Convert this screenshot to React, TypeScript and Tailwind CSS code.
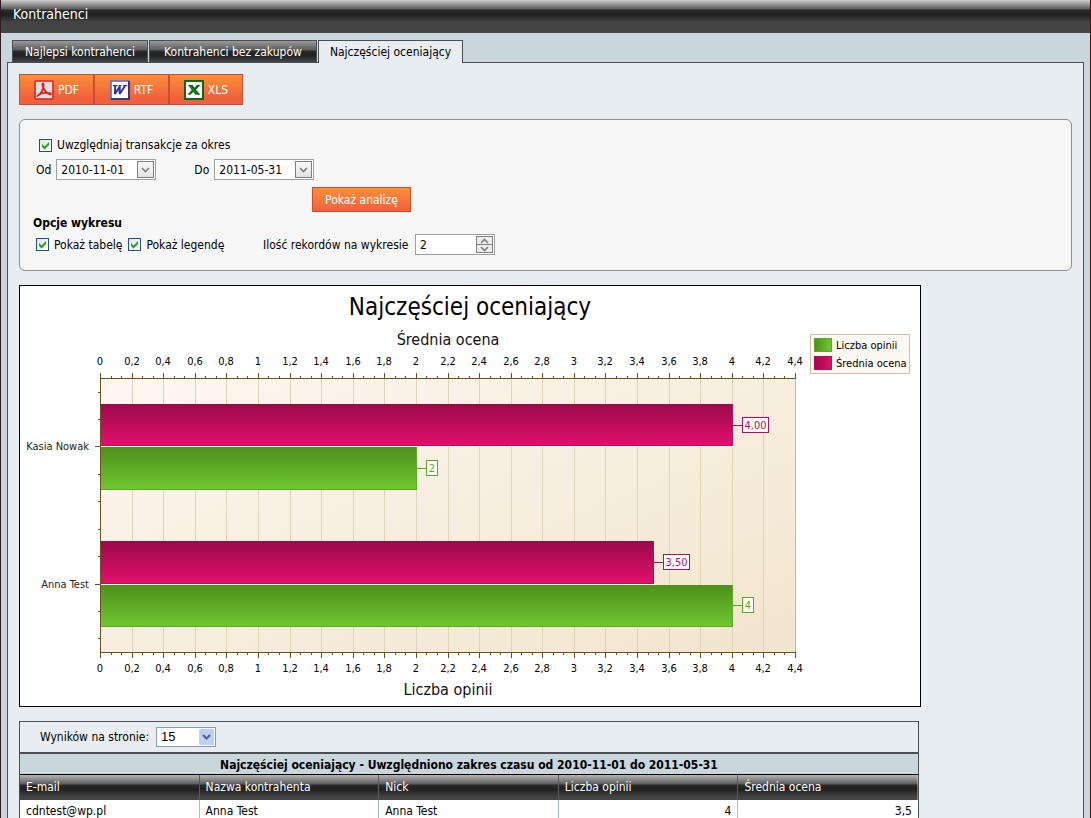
import React from 'react';

const tabs = [
  { label: 'Najlepsi kontrahenci', width: 'w-[136px]', active: false },
  { label: 'Kontrahenci bez zakupów', width: 'w-[168px]', active: false },
  { label: 'Najczęściej oceniający', width: 'w-[145px]', active: true },
];

const columns = ['E-mail', 'Nazwa kontrahenta', 'Nick', 'Liczba opinii', 'Średnia ocena'];

const rows = [{ email: 'cdntest@wp.pl', name: 'Anna Test', nick: 'Anna Test', reviews: '4', average: '3,5' }];

function PdfIcon() {
  return (
    <svg width="20" height="20" viewBox="0 0 20 20" aria-hidden="true">
      <rect x="1" y="1" width="18" height="18" rx="1" fill="#dedede" stroke="#d8241c" strokeWidth="1.6" />
      <path
        d="M3.200 16c2.600-1 5-4.500 6-8.200.6-2.300.5-4.300-.2-4.400-.9-.1-.7 2.600.6 5.100 1.600 3 4 5.500 7.200 6.100M3.200 16c2.500-2.600 8-3.800 13.600-2.600"
        fill="none"
        stroke="#d8241c"
        strokeWidth="1.800"
        strokeLinecap="round"
      />
    </svg>
  );
}

function WordIcon() {
  return (
    <svg width="20" height="20" viewBox="0 0 20 20" aria-hidden="true">
      <rect x="1" y="1" width="18" height="18" fill="#fff" stroke="#6a6ab4" strokeWidth="1.6" />
      <path d="M1 19h18V1" fill="none" stroke="#26266e" strokeWidth="1.6" />
      <path
        d="M5.200 6l-.2 8 4.800-7.500-.2 7.500L15 6"
        fill="none"
        stroke="#35358c"
        strokeWidth="2"
        strokeLinejoin="bevel"
      />
      <path d="M3 5.700h4.500M8.500 5.700h3M13 5.700h4.300" fill="none" stroke="#35358c" strokeWidth="1.2" />
    </svg>
  );
}

function ExcelIcon() {
  return (
    <svg width="20" height="20" viewBox="0 0 20 20" aria-hidden="true">
      <rect x="1" y="1" width="18" height="18" fill="#fff" stroke="#0b6a12" strokeWidth="2" />
      <path d="M4 5h4.500l2 2.700L13 5h3.500l-4.500 4.800 4.500 5h-5l-2.300-2.800-2.700 2.800H3.500l4.200-4.800z" fill="#0b6a12" />
      <path d="M5.700 6l7.500 8" stroke="#4f9f55" strokeWidth=".6" />
    </svg>
  );
}

const exports = [
  { label: 'PDF', icon: <PdfIcon />, width: 'w-[75px]' },
  { label: 'RTF', icon: <WordIcon />, width: 'w-[75px]' },
  { label: 'XLS', icon: <ExcelIcon />, width: 'w-[74px]' },
];

function Chevron({ up = false }: { up?: boolean }) {
  return (
    <svg width="9" height="6" viewBox="0 0 9 6" className={up ? 'rotate-180' : ''} aria-hidden="true">
      <path d="M1 1l3.500 3.500L8 1" fill="none" stroke="#7d7d7d" strokeWidth="1.6" />
    </svg>
  );
}

function CheckField({ label }: { label: string }) {
  return (
    <label className="flex items-center gap-[5px]">
      <span className="relative flex">
        <input
          type="checkbox"
          defaultChecked
          className="peer size-[13px] appearance-none border border-[#1c5180] bg-linear-to-br from-[#e4e4e0] to-white"
        />
        <svg
          viewBox="0 0 13 13"
          className="pointer-events-none absolute inset-0 size-[13px] opacity-0 peer-checked:opacity-100"
          aria-hidden="true"
        >
          <path d="M3 5v3l2.500 2.500L10 6V3L5.500 7.500z" fill="#21a121" />
        </svg>
      </span>
      {label}
    </label>
  );
}

function DateField({ id, label, value }: { id: string; label: string; value: string }) {
  return (
    <div className="flex items-center gap-[5px]">
      <label htmlFor={id}>{label}</label>
      <div className="flex h-[21px] w-[100px] items-center border border-[#9f9f9f] bg-white p-px">
        <input id={id} type="text" defaultValue={value} className="min-w-0 flex-1 pl-[3px] outline-none" />
        <button
          type="button"
          aria-label={`${label} – kalendarz`}
          className="flex size-[17px] shrink-0 items-center justify-center border border-[#7f7f7f] bg-linear-to-b from-[#fafafa] to-[#e2e2e2]"
        >
          <Chevron />
        </button>
      </div>
    </div>
  );
}

// Plot area geometry inside the 900x420 drawing
const LEFT = 80;
const RIGHT = 775;
const TOP = 92;
const BOTTOM = 366;
const MAX = 4.4;

const px = (value: number) => Math.round(LEFT + (value * (RIGHT - LEFT)) / MAX);

const bars = [
  { value: 4, text: '4,00', y: 118, height: 42, kind: 'average' },
  { value: 2, text: '2', y: 161, height: 43, kind: 'reviews' },
  { value: 3.5, text: '3,50', y: 255, height: 43, kind: 'average' },
  { value: 4, text: '4', y: 299, height: 42, kind: 'reviews' },
];

const categories = [
  { label: 'Kasia Nowak', y: 160 },
  { label: 'Anna Test', y: 298 },
];

function Chart() {
  const majors = Array.from({ length: 23 }, (_, i) => i * 0.2);
  const minors = Array.from({ length: 67 }, (_, i) => i).filter((i) => i % 3 !== 0);

  return (
    <svg
      viewBox="0 0 900 420"
      className="block h-auto w-full font-['DejaVu_Sans_Condensed',Tahoma,sans-serif]"
      role="img"
      aria-label="Najczęściej oceniający"
    >
      <defs>
        <linearGradient id="plot" x1="0" y1="0" x2="1" y2="1">
          <stop offset="0" stopColor="#fff7f2" />
          <stop offset="0.35" stopColor="#f8f1e4" />
          <stop offset="1" stopColor="#f2e5cd" />
        </linearGradient>
        <linearGradient id="average" x1="0" y1="0" x2="0" y2="1">
          <stop offset="0" stopColor="#9b0a4a" />
          <stop offset="1" stopColor="#e30f6c" />
        </linearGradient>
        <linearGradient id="reviews" x1="0" y1="0" x2="0" y2="1">
          <stop offset="0" stopColor="#4d8f1c" />
          <stop offset="1" stopColor="#70c82f" />
        </linearGradient>
        <linearGradient id="legendAverage">
          <stop offset="0" stopColor="#9b0a4a" />
          <stop offset="1" stopColor="#e30f6c" />
        </linearGradient>
        <linearGradient id="legendReviews">
          <stop offset="0" stopColor="#4d8f1c" />
          <stop offset="1" stopColor="#70c82f" />
        </linearGradient>
      </defs>

      <text x="450" y="29" fontSize="24" textAnchor="middle">
        Najczęściej oceniający
      </text>
      <text x="428" y="59" fontSize="16" textAnchor="middle" fill="#111">
        Średnia ocena
      </text>
      <text x="428" y="409" fontSize="16" textAnchor="middle" fill="#111">
        Liczba opinii
      </text>

      <rect x={LEFT} y={TOP} width={RIGHT - LEFT} height={BOTTOM - TOP} fill="url(#plot)" />

      {/* Grid lines */}
      {majors.slice(1).map((v) => (
        <rect key={v} x={px(v)} y={TOP} width="1" height={BOTTOM - TOP} fill={v > 4.3 ? '#c9b899' : '#dfd4b8'} />
      ))}

      {/* Axes with major and minor ticks */}
      <g fill="#6e4f1b">
        <rect x={LEFT} y={TOP} width={RIGHT - LEFT + 1} height="1" />
        <rect x={LEFT} y={BOTTOM} width={RIGHT - LEFT + 1} height="1" />
        <rect x={LEFT} y={TOP} width="1" height={BOTTOM - TOP} />
        {majors.map((v) => (
          <React.Fragment key={v}>
            <rect x={px(v)} y={TOP - 5} width="1" height="5" />
            <rect x={px(v)} y={BOTTOM} width="1" height="6" />
          </React.Fragment>
        ))}
        {minors.map((i) => (
          <React.Fragment key={i}>
            <rect x={px(i / 15)} y={TOP - 2} width="1" height="2" />
            <rect x={px(i / 15)} y={BOTTOM + 1} width="1" height="2" />
          </React.Fragment>
        ))}
        {[106, 133, 188, 215, 243, 270, 325, 352].map((y) => (
          <rect key={y} x={LEFT - 2} y={y} width="2" height="1" />
        ))}
        {categories.map((c) => (
          <rect key={c.label} x={LEFT - 5} y={c.y} width="5" height="1" />
        ))}
      </g>

      {majors.map((v) => {
        const text = String(Math.round(v * 10) / 10).replace('.', ',');
        return (
          <g key={v} fontSize="11" textAnchor="middle">
            <text x={px(v)} y="79">{text}</text>
            <text x={px(v)} y="386">{text}</text>
          </g>
        );
      })}

      {categories.map((c) => (
        <text key={c.label} x="69" y={c.y + 4} fontSize="11" textAnchor="end" fill="#222">
          {c.label}
        </text>
      ))}

      {bars.map((b) => {
        const color = b.kind === 'average' ? '#bd0c5c' : '#5ba727';
        const end = px(b.value) + 1;
        const mid = b.kind === 'average' ? b.y + 21 : categories[0].y + 22 + (b.y > 200 ? 137 : 0);
        const boxWidth = b.text.length > 1 ? 26 : 11;
        return (
          <g key={b.y}>
            <rect x={LEFT + 1} y={b.y} width={end - LEFT - 1} height={b.height} fill={`url(#${b.kind})`} />
            <rect x={LEFT + 1} y={b.y + b.height - 1} width={end - LEFT - 1} height="1" fill={color} />
            <rect x={end - 1} y={b.y} width="1" height={b.height} fill={color} />
            {b.kind === 'average' && (
              <rect x={LEFT + 1} y={b.y + b.height} width={end - LEFT - 1} height="1" fill="#fffaf2" />
            )}
            <rect x={end} y={mid} width="9" height="1" fill={color} />
            <rect x={end + 9.5} y={mid - 7.5} width={boxWidth} height="15" fill="#fff" stroke={color} />
            <text x={end + 9.5 + boxWidth / 2} y={mid + 4} fontSize="11" textAnchor="middle" fill={color}>
              {b.text}
            </text>
          </g>
        );
      })}

      {/* Legend */}
      <rect x="790.5" y="48.5" width="99" height="39" fill="#fdf8f1" stroke="#d3c09e" />
      <rect x="794.5" y="52.5" width="17" height="13" fill="url(#legendReviews)" stroke="#5ba727" />
      <rect x="794.5" y="70.5" width="17" height="13" fill="url(#legendAverage)" stroke="#bd0c5c" />
      <text x="816" y="63" fontSize="11">Liczba opinii</text>
      <text x="816" y="81" fontSize="11">Średnia ocena</text>
    </svg>
  );
}

export default function App() {
  return (
    <div className="flex min-h-screen flex-col border-x border-[#33191d] bg-[#c9d6db] font-['DejaVu_Sans_Condensed',Tahoma,sans-serif] text-[12px] leading-4 text-black">
      <header className="flex h-[33px] items-center bg-[linear-gradient(to_bottom,#cbcbcb_0,#5c5c5c_9px,#2a2a2a_10px,#202020_15px,#444_22px)] px-3 pb-[5px]">
        <h1 className="text-[14px] text-white">Kontrahenci</h1>
      </header>

      <nav className="flex items-start gap-px px-[11px] pt-[7px]">
        {tabs.map((tab) => (
          <a
            key={tab.label}
            href="#"
            className={
              tab.active
                ? `z-10 -mb-px flex h-[23px] items-center justify-center border border-b-0 border-[#4c4f52] bg-[#e7edf0] ${tab.width}`
                : `flex h-[22px] items-center justify-center border border-b-0 border-[#4c4f52] bg-[linear-gradient(to_bottom,#9a9a9a_0,#5c5c5c_9px,#2a2a2a_10px,#202020_14px,#444_21px)] text-white ${tab.width}`
            }
          >
            {tab.label}
          </a>
        ))}
      </nav>

      <main className="mx-[6px] flex flex-1 flex-col gap-[14px] border border-b-0 border-[#4c4f52] bg-[#e7edf0] px-[11px] pt-[11px]">
        <div className="flex">
          {exports.map((item) => (
            <button
              key={item.label}
              type="button"
              className={`flex h-[31px] items-center justify-center gap-1 border border-[#d04c2e] bg-linear-to-b from-[#fb8f38] to-[#f0603c] to-80% text-white ${item.width}`}
            >
              {item.icon}
              {item.label}
            </button>
          ))}
        </div>

        <form
          className="rounded-md border border-[#8f8f8f] bg-[#f6f6f6] px-[13px] pt-[15px] pb-[15px]"
          onSubmit={(e) => e.preventDefault()}
        >
          <div className="flex h-5 items-center pl-[6px]">
            <CheckField label="Uwzględniaj transakcje za okres" />
          </div>
          <div className="mt-1 flex gap-[38px] pl-[3px]">
            <DateField id="od" label="Od" value="2010-11-01" />
            <DateField id="do" label="Do" value="2011-05-31" />
          </div>
          <div className="mt-[7px] flex w-[378px] justify-end">
            <button
              type="submit"
              className="h-[25px] w-[99px] border border-[#d04c2e] bg-linear-to-b from-[#fb8f38] to-[#f0603c] text-white"
            >
              Pokaż analizę
            </button>
          </div>
          <h2 className="mt-[3px] mb-[3px] font-bold">Opcje wykresu</h2>
          <div className="flex items-center pl-[3px]">
            <div className="flex w-[227px] gap-[6px]">
              <CheckField label="Pokaż tabelę" />
              <CheckField label="Pokaż legendę" />
            </div>
            <label htmlFor="records" className="w-[152px]">
              Ilość rekordów na wykresie
            </label>
            <div className="flex h-[21px] w-20 items-center border border-[#9f9f9f] bg-white p-px">
              <input id="records" type="text" defaultValue="2" className="min-w-0 flex-1 pl-[3px] outline-none" />
              <div className="flex w-[17px] shrink-0 flex-col divide-y divide-[#7f7f7f] border border-[#7f7f7f] bg-[#ededed]">
                <button type="button" aria-label="Więcej" className="flex h-2 items-center justify-center">
                  <Chevron up />
                </button>
                <button type="button" aria-label="Mniej" className="flex h-[7px] items-center justify-center">
                  <Chevron />
                </button>
              </div>
            </div>
          </div>
        </form>

        <div className="w-[902px] max-w-full border border-black bg-white">
          <Chart />
        </div>

        <section className="w-[900px] max-w-full border border-b-0 border-[#4c4f52]">
          <div className="flex h-[30px] items-center gap-[7px] pl-5">
            <label htmlFor="page-size">Wyników na stronie:</label>
            <span className="relative flex">
              <select
                id="page-size"
                defaultValue="15"
                className="h-5 w-[60px] appearance-none border border-[#7f9db9] bg-white pl-1 font-['Liberation_Sans',Arial,sans-serif] text-[13px] leading-4"
              >
                <option>15</option>
                <option>30</option>
                <option>50</option>
              </select>
              <svg viewBox="0 0 15 16" className="pointer-events-none absolute top-[2px] right-[2px] h-4 w-[15px]" aria-hidden="true">
                <rect width="15" height="16" rx="1" fill="#bdd0fb" />
                <path d="M4 6l3.500 3.500L11 6" fill="none" stroke="#4d6185" strokeWidth="2" />
              </svg>
            </span>
          </div>
          <table className="w-full table-fixed border-separate border-spacing-0">
            <caption className="h-[23px] border-t-2 border-b border-t-[#4c4f52] border-b-black bg-[#c9d6db] pt-[3px] font-bold">
              Najczęściej oceniający - Uwzględniono zakres czasu od 2010-11-01 do 2011-05-31
            </caption>
            <thead>
              <tr className="h-[25px] bg-[linear-gradient(to_bottom,#b5b5b5_0,#5c5c5c_9px,#2a2a2a_10px,#202020_14px,#444_22px)] text-left text-white">
                {columns.map((column) => (
                  <th key={column} scope="col" className="border-r border-[#5a5a5a] px-[6px] pb-[2px] font-normal last:border-r-0">
                    {column}
                  </th>
                ))}
              </tr>
            </thead>
            <tbody>
              {rows.map((row) => (
                <tr key={row.email} className="h-[22px] bg-white">
                  <td className="border-r border-[#a3bdd3] px-[6px]">{row.email}</td>
                  <td className="border-r border-[#a3bdd3] px-[6px]">{row.name}</td>
                  <td className="border-r border-[#a3bdd3] px-[6px]">{row.nick}</td>
                  <td className="border-r border-[#a3bdd3] px-[6px] text-right">{row.reviews}</td>
                  <td className="px-[6px] text-right">{row.average}</td>
                </tr>
              ))}
            </tbody>
          </table>
        </section>
      </main>
    </div>
  );
}
